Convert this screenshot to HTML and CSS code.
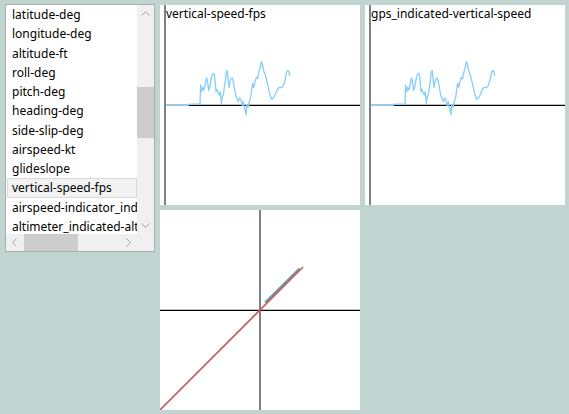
FILE: index.html
```html
<!DOCTYPE html>
<html>
<head>
<meta charset="utf-8">
<link rel="stylesheet" href="styles.css">
</head>
<body>
<div class="layout">
  <div class="listbox">
    <div class="items">
      <div class="item">latitude-deg</div>
      <div class="item">longitude-deg</div>
      <div class="item">altitude-ft</div>
      <div class="item">roll-deg</div>
      <div class="item">pitch-deg</div>
      <div class="item">heading-deg</div>
      <div class="item">side-slip-deg</div>
      <div class="item">airspeed-kt</div>
      <div class="item">glideslope</div>
      <div class="item selected">vertical-speed-fps</div>
      <div class="item">airspeed-indicator_indicated-speed-kt</div>
      <div class="item">altimeter_indicated-altitude-ft</div>
    </div>
    <div class="vscroll">
      <div class="sbtn"><svg width="9" height="5" viewBox="0 0 9 5"><path d="M0.5 4.5 L4.5 0.7 L8.5 4.5" fill="none" stroke="#a3a3a3" stroke-width="1"/></svg></div>
      <div class="vtrack"><div class="vthumb"></div></div>
      <div class="sbtn"><svg width="9" height="5" viewBox="0 0 9 5"><path d="M0.5 0.5 L4.5 4.3 L8.5 0.5" fill="none" stroke="#a3a3a3" stroke-width="1"/></svg></div>
    </div>
    <div class="hscroll">
      <div class="sbtn"><svg width="5" height="9" viewBox="0 0 5 9"><path d="M4.5 0.5 L0.7 4.5 L4.5 8.5" fill="none" stroke="#a3a3a3" stroke-width="1"/></svg></div>
      <div class="htrack"><div class="hthumb"></div></div>
      <div class="sbtn"><svg width="5" height="9" viewBox="0 0 5 9"><path d="M0.5 0.5 L4.3 4.5 L0.5 8.5" fill="none" stroke="#a3a3a3" stroke-width="1"/></svg></div>
    </div>
    <div class="corner"></div>
  </div>

  <div class="chart">
    <svg class="plot" width="200" height="200" viewBox="15 15 600 600">
      <line x1="30" y1="15" x2="30" y2="615" stroke="#808080" stroke-width="6"/>
      <line x1="33" y1="316" x2="615" y2="316" stroke="#000" stroke-width="4"/>
      <path class="trace" d="M33,316 L100,316 L100,313 L135,312 L137,255 L140,275 L143,262 L146,270 L149,262 L152,245 L155,234 L158,248 L161,272 L164,262 L167,245 L170,230 L174,220 L178,222 L180,240 L183,275 L186,268 L189,278 L193,285 L196,275 L199,310 L202,290 L205,285 L208,262 L211,242 L214,215 L217,212 L220,248 L222,262 L225,245 L228,236 L232,234 L235,245 L238,262 L242,285 L246,295 L250,305 L254,294 L258,300 L262,316 L265,305 L268,322 L271,330 L273,345 L275,316 L279,322 L283,305 L287,292 L290,270 L293,250 L296,262 L300,245 L304,232 L308,236 L311,218 L315,205 L319,185 L322,192 L326,212 L331,225 L336,245 L340,262 L345,285 L350,298 L355,294 L360,285 L366,270 L372,262 L380,263 L385,256 L390,240 L394,220 L398,211 L402,216 L404,228"/>
    </svg>
    <div class="title">vertical-speed-fps</div>
  </div>

  <div class="chart">
    <svg class="plot" width="200" height="200" viewBox="15 15 600 600">
      <line x1="30" y1="15" x2="30" y2="615" stroke="#808080" stroke-width="6"/>
      <line x1="33" y1="316" x2="615" y2="316" stroke="#000" stroke-width="4"/>
      <path class="trace" d="M33,316 L100,316 L100,313 L135,312 L137,255 L140,275 L143,262 L146,270 L149,262 L152,245 L155,234 L158,248 L161,272 L164,262 L167,245 L170,230 L174,220 L178,222 L180,240 L183,275 L186,268 L189,278 L193,285 L196,275 L199,310 L202,290 L205,285 L208,262 L211,242 L214,215 L217,212 L220,248 L222,262 L225,245 L228,236 L232,234 L235,245 L238,262 L242,285 L246,295 L250,305 L254,294 L258,300 L262,316 L265,305 L268,322 L271,330 L273,345 L275,316 L279,322 L283,305 L287,292 L290,270 L293,250 L296,262 L300,245 L304,232 L308,236 L311,218 L315,205 L319,185 L322,192 L326,212 L331,225 L336,245 L340,262 L345,285 L350,298 L355,294 L360,285 L366,270 L372,262 L380,263 L385,256 L390,240 L394,220 L398,211 L402,216 L404,228"/>
    </svg>
    <div class="title">gps_indicated-vertical-speed</div>
  </div>

  <div class="chart xy">
    <svg class="plot" width="200" height="200" viewBox="15 15 600 600">
      <line x1="315" y1="15" x2="315" y2="615" stroke="#808080" stroke-width="6"/>
      <line x1="15" y1="316" x2="615" y2="316" stroke="#000" stroke-width="4"/>
      <line x1="331" y1="293" x2="434" y2="191" stroke="#5f9ea0" stroke-width="8"/>
      <line x1="15" y1="615" x2="444" y2="186" stroke="#cd5c5c" stroke-width="5"/>
    </svg>
  </div>
</div>
</body>
</html>
```

FILE: styles.css
```css
html, body {
  margin: 0;
  padding: 0;
  background: #c0d4d0;
  width: 569px;
  height: 414px;
  overflow: hidden;
}

body {
  font-family: "Noto Sans", "DejaVu Sans", sans-serif;
  font-size: 12px;
  color: #000;
}

.layout {
  display: grid;
  grid-template-columns: 150px 200px 200px;
  grid-template-rows: 200px 200px;
  gap: 5px;
  padding: 5px;
}

.listbox {
  grid-column: 1;
  grid-row: 1 / span 2;
  align-self: start;
  margin-top: -1px;
  width: 150px;
  height: 248px;
  box-sizing: border-box;
  border: 1px solid #acacac;
  background: #fff;
  display: grid;
  grid-template-columns: 1fr 17px;
  grid-template-rows: 1fr 17px;
  overflow: hidden;
}

.items {
  overflow: hidden;
  padding-left: 1px;
  white-space: nowrap;
}

.item {
  height: 19.25px;
  line-height: 17px;
  box-sizing: border-box;
  padding-left: 4px;
  border: 1px solid transparent;
}

.item.selected {
  background: #f2f2f2;
  border-color: #dadada;
}

.vscroll {
  background: #f0f0f0;
  display: flex;
  flex-direction: column;
}

.sbtn {
  width: 17px;
  height: 17px;
  flex: none;
  display: flex;
  align-items: center;
  justify-content: center;
}

.vtrack {
  flex: 1;
  padding-top: 65px;
}

.vthumb {
  width: 17px;
  height: 51px;
  background: #cdcdcd;
}

.hscroll {
  background: #f0f0f0;
  display: flex;
}

.htrack {
  flex: 1;
  display: flex;
  padding-left: 1px;
}

.hthumb {
  width: 54px;
  height: 17px;
  background: #cdcdcd;
}

.corner {
  background: #f0f0f0;
}

.chart {
  position: relative;
  width: 200px;
  height: 200px;
  background: #fff;
}

.chart.xy {
  grid-column: 2;
  grid-row: 2;
}

.plot {
  display: block;
}

.trace {
  fill: none;
  stroke: #87cefa;
  stroke-width: 4;
  stroke-linejoin: round;
}

.title {
  position: absolute;
  left: 6px;
  top: 0;
  line-height: 17px;
  white-space: nowrap;
}
```
